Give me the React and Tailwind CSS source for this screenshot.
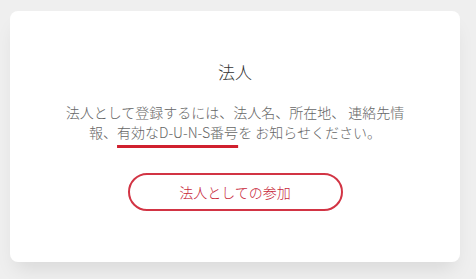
export default function App() {
  return (
    <div className="w-[476px] h-[279px] bg-[#efefef] pt-[11px] pl-[10px] overflow-hidden" style={{ fontFamily: '"Noto Sans CJK JP", "Noto Sans", sans-serif' }}>
      <div className="w-[450px] h-[251px] bg-white rounded-lg shadow-[0_12px_20px_-6px_rgba(0,0,0,0.1)] flex flex-col items-center pt-[48px]">
        <h1 className="text-[17px] leading-[26px] text-[#333] font-light">法人</h1>
        <p className="mt-[17px] text-[14px] leading-[20px] text-[#666] font-light text-center w-[350px]">
          法人として登録するには、法人名、所在地、 連絡先情報、<span className="underline decoration-[#d0202e] decoration-[3px] underline-offset-[7px]">有効なD-U-N-S番号</span>を お知らせください。
        </p>
        <button className="mt-[31px] w-[215px] h-[38px] rounded-full border-2 border-[#d23444] text-[#c8283a] text-[14px] font-light">
          法人としての参加
        </button>
      </div>
    </div>
  );
}
